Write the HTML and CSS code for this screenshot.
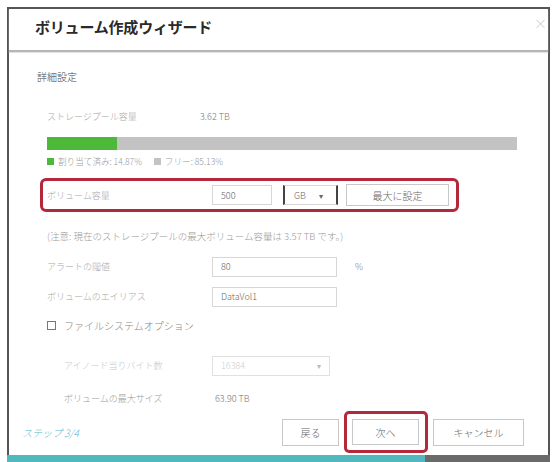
FILE: index.html
```html
<!DOCTYPE html>
<html lang="ja">
<head>
<meta charset="utf-8">
<link rel="stylesheet" href="styles.css">
</head>
<body>
<div class="dialog">
  <div class="header">
    <span class="title">ボリューム作成ウィザード</span>
    <span class="close">×</span>
  </div>
  <div class="body">
    <div class="section-title">詳細設定</div>
    <div class="indent">
      <div class="field info">
        <span class="label w-storage">ストレージプール容量</span>
        <span class="value">3.62 TB</span>
      </div>
      <div class="bar"><div class="bar-fill" style="width:14.87%"></div></div>
      <div class="legend">
        <span class="sq green"></span><span class="legend-text">割り当て済み: 14.87%</span>
        <span class="sq gray"></span><span class="legend-text">フリー: 85.13%</span>
      </div>
      <div class="hl">
        <span class="label w-main">ボリューム容量</span>
        <span class="input w-size">500</span>
        <span class="select unit">GB <span class="caret">▾</span></span>
        <span class="btn max">最大に設定</span>
      </div>
      <div class="note">(注意: 現在のストレージプールの最大ボリューム容量は 3.57 TB です。)</div>
      <div class="field alert">
        <span class="label w-main">アラートの閾値</span>
        <span class="input w-long">80</span>
        <span class="unit-text">%</span>
      </div>
      <div class="field alias">
        <span class="label w-main">ボリュームのエイリアス</span>
        <span class="input w-long">DataVol1</span>
      </div>
      <div class="check-row">
        <span class="checkbox"></span>
        <span class="check-label">ファイルシステムオプション</span>
      </div>
      <div class="sub">
        <div class="field inode">
          <span class="label w-sub disabled">アイノード当りバイト数</span>
          <span class="select inode-select"><span>16384</span><span class="caret">▾</span></span>
        </div>
        <div class="field maxsize">
          <span class="label w-sub2">ボリュームの最大サイズ</span>
          <span class="value">63.90 TB</span>
        </div>
      </div>
    </div>
  </div>
  <div class="footer">
    <span class="step">ステップ 3/4</span>
    <div class="buttons">
      <span class="btn back">戻る</span>
      <span class="hl-btn"><span class="btn next">次へ</span></span>
      <span class="btn cancel">キャンセル</span>
    </div>
  </div>
  <div class="strip"><div class="strip-teal"></div><div class="strip-gray"></div></div>
</div>
</body>
</html>
```
FILE: styles.css
```css
* { box-sizing: border-box; }
body {
  margin: 0;
  background: #fff;
  font-family: "Noto Sans CJK JP", "Noto Sans", sans-serif;
  font-weight: 300;
  color: #999;
}
.dialog {
  margin: 7px 0 0 7px;
  width: 543px;
  border: 2px solid #555;
  border-bottom: none;
  background: #fff;
  display: flex;
  flex-direction: column;
}
.header {
  height: 43px;
  border-bottom: 2px solid #b5b5b5;
  display: flex;
  align-items: center;
  justify-content: space-between;
  padding: 0 1px 6px 26px;
  box-shadow: 0 1px 1px #e4e4e4;
}
.title {
  font-size: 15px;
  font-weight: 700;
  color: #2a2a2a;
  letter-spacing: -0.2px;
}
.close {
  font-size: 13px;
  color: #c8c8c8;
  align-self: flex-start;
  margin-top: 4px;
}
.body {
  padding: 15px 0 0 28px;
  display: flex;
  flex-direction: column;
}
.section-title {
  height: 20px;
  line-height: 20px;
  font-size: 10px;
  color: #444;
}
.indent {
  margin-left: 10px;
  display: flex;
  flex-direction: column;
}
.field {
  display: flex;
  align-items: center;
  height: 21px;
  font-size: 9px;
}
.label { flex: none; color: #a8a8a8; }
.w-storage { width: 153px; }
.w-main { width: 165px; }
.w-sub { width: 148px; }
.w-sub2 { width: 151px; }
.value { color: #777; }
.info { margin-top: 19px; }
.bar {
  margin-top: 10px;
  width: 470px;
  height: 13px;
  background: #c3c3c3;
}
.bar-fill { height: 100%; background: #4db93a; }
.legend {
  margin-top: 5px;
  height: 12px;
  display: flex;
  align-items: center;
  font-size: 8.6px;
  color: #999;
}
.sq { width: 7px; height: 7px; margin-right: 4px; }
.sq.green { background: #4db93a; }
.sq.gray { background: #c3c3c3; margin-left: 12px; }
.hl {
  margin-top: 11px;
  margin-left: -7px;
  align-self: flex-start;
  height: 34px;
  border: 3px solid #b3283a;
  border-radius: 6px;
  padding: 0 7px 0 4px;
  display: flex;
  align-items: center;
  font-size: 9px;
}
.input {
  height: 20px;
  border: 1px solid #d6d6d6;
  background: #fff;
  color: #666;
  padding-left: 8px;
  display: flex;
  align-items: center;
  font-size: 9px;
}
.w-size { width: 60px; }
.w-long { width: 125px; }
.select {
  height: 20px;
  display: flex;
  align-items: center;
  font-size: 9px;
  color: #666;
}
.unit {
  width: 55px;
  margin-left: 11px;
  border: 1px solid #d6d6d6;
  border-left: 2px solid #444;
  border-right: 2px solid #444;
  padding-left: 9px;
  justify-content: flex-start;
}
.unit .caret { margin-left: 13px; font-size: 8px; }
.btn {
  height: 22px;
  border: 1px solid #c8c8c8;
  background: #fff;
  color: #666;
  display: flex;
  align-items: center;
  justify-content: center;
  font-size: 10px;
}
.max { width: 103px; margin-left: 8px; }
.note {
  margin-top: 17px;
  height: 14px;
  line-height: 14px;
  font-size: 9.5px;
  color: #999;
  white-space: nowrap;
}
.alert { margin-top: 13px; }
.unit-text { margin-left: 18px; color: #888; }
.alias { margin-top: 9px; }
.check-row {
  margin-top: 11px;
  height: 14px;
  display: flex;
  align-items: center;
  font-size: 10px;
  color: #888;
}
.checkbox {
  width: 9px;
  height: 9px;
  border: 1px solid #777;
  margin-right: 8px;
}
.sub {
  margin-left: 17px;
  display: flex;
  flex-direction: column;
}
.inode { margin-top: 23px; }
.disabled { color: #c8c8c8; }
.inode-select {
  width: 118px;
  border: 1px solid #e0e0e0;
  color: #d0d0d0;
  padding: 0 8px;
  justify-content: space-between;
}
.inode-select .caret { font-size: 8px; color: #bbb; }
.maxsize { margin-top: 15px; height: 14px; }
.maxsize .label { color: #999; }
.footer {
  margin-top: 6px;
  padding: 0 0 0 13px;
  display: flex;
  align-items: center;
  justify-content: space-between;
  height: 42px;
}
.step {
  color: #5bb6d2;
  font-size: 10px;
  font-style: italic;
}
.buttons {
  display: flex;
  align-items: center;
  margin-right: 24px;
}
.back { width: 57px; height: 27px; }
.hl-btn {
  margin-left: 5px;
  border: 3px solid #b3283a;
  border-radius: 5px;
  padding: 5px 6px 5px 5px;
  display: flex;
}
.next { width: 67px; height: 26px; }
.cancel { width: 91px; height: 27px; margin-left: 5px; }
.strip {
  margin-top: 2px;
  margin-left: -2px;
  margin-right: -2px;
  height: 7px;
  display: flex;
}
.strip-teal { width: 418px; background: #4fb9bd; }
.strip-gray { flex: 1; background: #6a6a6a; }
```
